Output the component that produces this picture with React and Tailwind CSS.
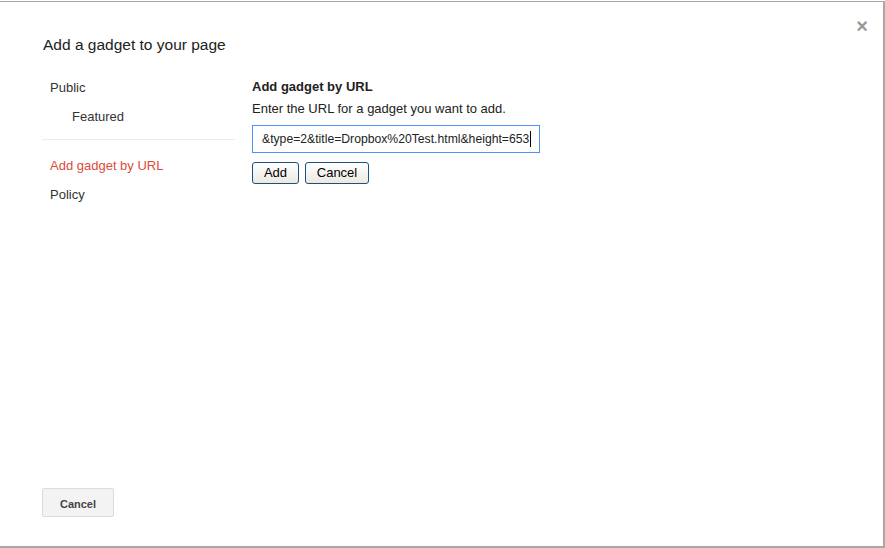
import React from "react";

export default function App() {
    const navItems = [
        { label: "Public", indent: false },
        { label: "Featured", indent: true },
    ];

    return (
        <div
            className="w-[885px] h-[548px] bg-white pt-px"
            style={{ fontFamily: '"Liberation Sans", Arial, sans-serif' }}
        >
            <div className="relative h-[547px] border-t border-r-2 border-b-2 border-[#a8a8a8] flex flex-col">
                {/* close */}
                <button
                    type="button"
                    className="absolute right-[15px] top-[14px] text-[#999] text-[20px] leading-none font-bold"
                >
                    ×
                </button>

                <h1 className="pl-[43px] pt-[33px] text-[15.5px] text-[#222] leading-[20px]">
                    Add a gadget to your page
                </h1>

                <div className="flex pl-[42px] pt-[18px] flex-1">
                    {/* left nav */}
                    <div className="w-[193px]">
                        {navItems.map((item) => (
                            <div
                                key={item.label}
                                className={`h-[29px] flex items-center text-[13px] text-[#333] ${
                                    item.indent ? "pl-[30px]" : "pl-[8px]"
                                }`}
                            >
                                {item.label}
                            </div>
                        ))}
                        <div className="mt-[8px] mb-[11px] border-t border-[#ebebeb]" />
                        <div className="h-[29px] flex items-center pl-[8px] text-[13px] text-[#dd4b39]">
                            Add gadget by URL
                        </div>
                        <div className="h-[29px] flex items-center pl-[8px] text-[13px] text-[#333]">
                            Policy
                        </div>
                    </div>

                    {/* right panel */}
                    <div className="pl-[17px] pt-[6px]">
                        <h2 className="text-[13px] font-bold text-[#222] leading-[16px]">
                            Add gadget by URL
                        </h2>
                        <p className="mt-[6px] text-[13px] text-[#222] leading-[16px]">
                            Enter the URL for a gadget you want to add.
                        </p>
                        <div className="mt-[8px] w-[288px] h-[28px] border border-[#4d90fe] flex items-center pl-[9px] text-[12.2px] text-[#222] overflow-hidden whitespace-nowrap">
                            <span>&amp;type=2&amp;title=Dropbox%20Test.html&amp;height=653</span>
                            <span className="ml-px w-px h-[16px] bg-black" />
                        </div>
                        <div className="mt-[9px] flex gap-[6px]">
                            <button
                                type="button"
                                className="w-[47px] h-[22px] rounded-[3px] border border-[#1c4f82] bg-gradient-to-b from-white to-[#ebe9e0] text-[13px] text-black"
                            >
                                Add
                            </button>
                            <button
                                type="button"
                                className="w-[64px] h-[22px] rounded-[3px] border border-[#1c4f82] bg-gradient-to-b from-white to-[#ebe9e0] text-[13px] text-black"
                            >
                                Cancel
                            </button>
                        </div>
                    </div>
                </div>

                <div className="pl-[42px] pb-[29px]">
                    <button
                        type="button"
                        className="w-[72px] h-[29px] pt-[3px] rounded-[2px] border border-[#dcdcdc] bg-[#f3f3f3] text-[11px] font-bold text-[#444]"
                    >
                        Cancel
                    </button>
                </div>
            </div>
        </div>
    );
}
